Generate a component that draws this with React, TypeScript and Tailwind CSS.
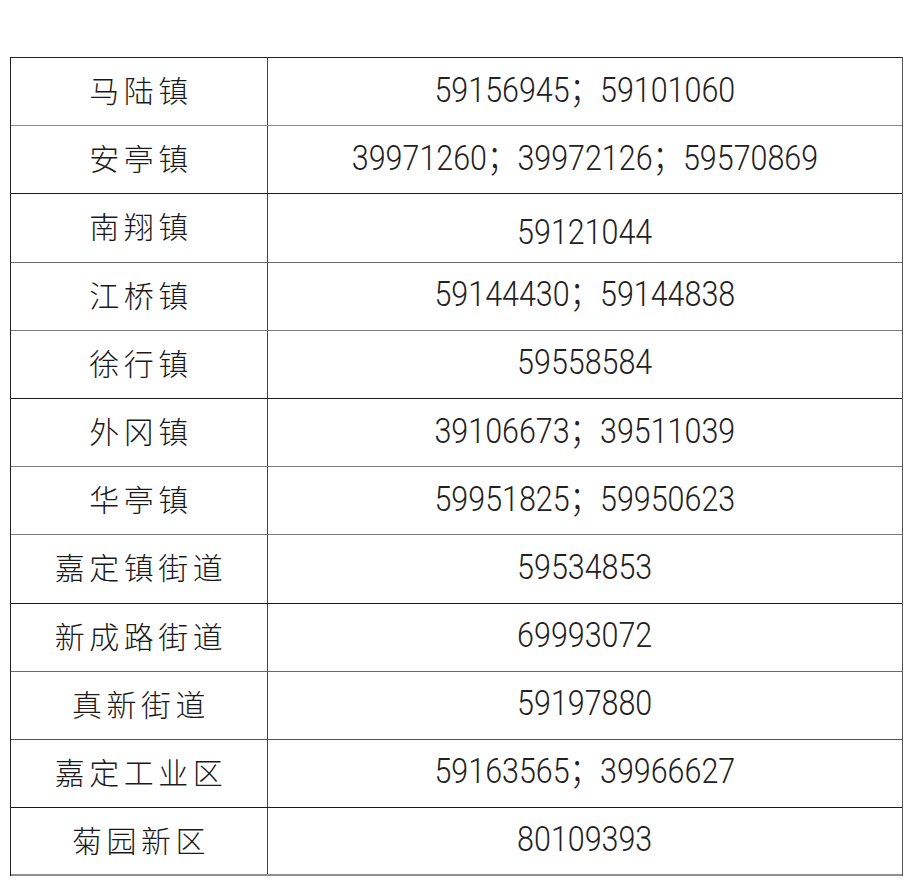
import React from 'react';

interface Row {
  name: string;
  phones: string[];
  line: string;
  lowered?: boolean;
}

const rows: Row[] = [
  { name: '马陆镇', phones: ['59156945', '59101060'], line: 'border-[#8a8a8a]' },
  { name: '安亭镇', phones: ['39971260', '39972126', '59570869'], line: 'border-[#1a1a1a]' },
  { name: '南翔镇', phones: ['59121044'], line: 'border-[#6a6a6a]', lowered: true },
  { name: '江桥镇', phones: ['59144430', '59144838'], line: 'border-[#777777]' },
  { name: '徐行镇', phones: ['59558584'], line: 'border-[#1a1a1a]' },
  { name: '外冈镇', phones: ['39106673', '39511039'], line: 'border-[#7a7a7a]' },
  { name: '华亭镇', phones: ['59951825', '59950623'], line: 'border-[#7a7a7a]' },
  { name: '嘉定镇街道', phones: ['59534853'], line: 'border-[#1a1a1a]' },
  { name: '新成路街道', phones: ['69993072'], line: 'border-[#6a6a6a]' },
  { name: '真新街道', phones: ['59197880'], line: 'border-[#555555]' },
  { name: '嘉定工业区', phones: ['59163565', '39966627'], line: 'border-[#1a1a1a]' },
  { name: '菊园新区', phones: ['80109393'], line: 'border-[#8f8f8f] border-b-2' },
];

const cjk = { fontFamily: '"Noto Sans CJK SC", "Noto Sans", sans-serif' };
const num = { fontFamily: 'Roboto, "Liberation Sans", "Noto Sans CJK SC", sans-serif' };

export default function App() {
  return (
    <div className="min-h-[892px] w-[915px] bg-white pt-[57px]">
      <div className="ml-[10px] w-[893px] border-t border-l-[1.5px] border-r border-t-[#222] border-l-[#222] border-r-[#555]">
        {rows.map((row) => (
          <div key={row.name} className={`grid h-[68.2px] grid-cols-[257px_1fr] border-b ${row.line}`}>
            <div className="flex items-center justify-center border-r border-[#444] pb-[5px] pl-[4px]">
              <span style={cjk} className="text-[30px] font-light leading-none tracking-[4.5px] text-[#1a1a1a]">
                {row.name}
              </span>
            </div>
            <div className={`flex justify-center ${row.lowered ? 'items-end pb-[12px]' : 'items-center pb-[3px]'}`}>
              <span
                style={num}
                className="inline-block scale-x-[0.87] text-[35px] font-light leading-none text-[#222]"
              >
                {row.phones.join('；')}
              </span>
            </div>
          </div>
        ))}
      </div>
    </div>
  );
}
